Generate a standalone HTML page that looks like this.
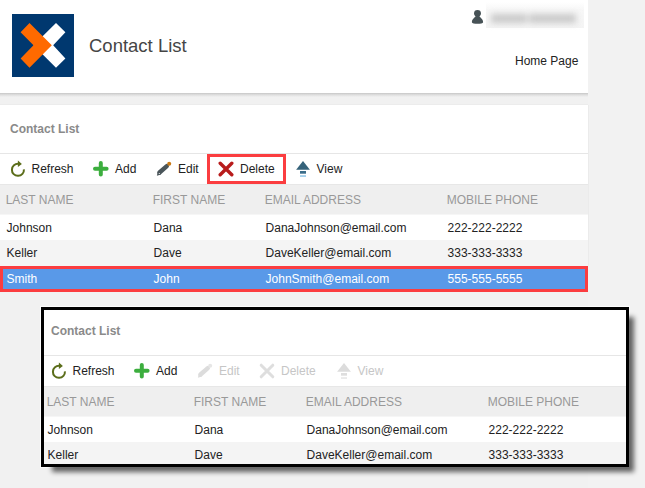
<!DOCTYPE html>
<html><head><meta charset="utf-8">
<style>
*{box-sizing:border-box;margin:0;padding:0}
html,body{width:645px;height:488px;overflow:hidden}
body{background:#f2f2f2;font-family:"Liberation Sans",Arial,sans-serif;font-size:12px;color:#222;position:relative}
.abs{position:absolute}
.hdr{left:0;top:0;width:588px;height:93px;background:#fff}
.hsh{left:0;top:93px;width:588px;height:4px;background:linear-gradient(#c6c6c6,#dcdcdc 40%,#f1f1f1)}
.logo{left:12px;top:14px;width:62px;height:63px}
.title{left:89px;top:34.6px;font-size:18.5px;color:#454545;letter-spacing:0px;white-space:nowrap}
.home{left:515px;top:54px;font-size:12px;color:#222;white-space:nowrap}
.ptitle{font-weight:bold;color:#8a8a8a;font-size:12px;white-space:nowrap}
.line{height:1px;background:#e6e6e6}
.tb{white-space:nowrap;font-size:12px;color:#222}
.th{color:#999;font-size:12px;white-space:nowrap}
.td{font-size:12px;color:#222;white-space:nowrap}
.tb.dis{color:#c6c6c6}
</style></head><body>
<div class="abs" style="left:0;top:0;width:588px;height:488px;background:#f1f1f1"></div>
<!-- header -->
<div class="abs hdr"></div>
<div class="abs hsh"></div>
<svg class="abs logo" viewBox="0 0 62 63"><rect width="62" height="63" fill="#00386f"/>
<polygon points="44,8.9 53.4,18.2 41.2,31.3 53.4,44.5 44,53.8 21.5,31.3" fill="#fff"/>
<polygon points="17.5,8.9 39.8,31.3 17.5,53.8 8.6,44.5 21.5,31.3 8.6,18.2" fill="#ff6a00"/>
</svg>
<div class="abs title">Contact List</div>
<svg class="abs" style="left:471px;top:9px" width="14" height="16" viewBox="0 0 14 16"><circle cx="6.5" cy="4.35" r="3.45" fill="#475256"/><path d="M0.9 13.2 C0.9 9.8 3.8 8.6 5.2 6.4 L7.8 6.4 C9.2 8.6 12.1 9.8 12.1 13.2 C12.1 15.2 0.9 15.2 0.9 13.2 Z" fill="#475256"/></svg>
<div class="abs" style="left:486px;top:2px;width:98px;height:26px;background:linear-gradient(#ffffff,#f7f7f7 30%,#f4f4f4)"></div>
<div class="abs" style="left:487px;top:9px;width:96px;height:19px;filter:blur(3px)"><div style="position:absolute;left:4px;top:5px;width:36px;height:9px;background:#c9c9c9"></div><div style="position:absolute;left:42px;top:5px;width:47px;height:9px;background:#c9c9c9"></div></div>
<div class="abs home">Home Page</div>

<!-- panel 1 -->
<div class="abs" style="left:0;top:104px;width:588px;height:1px;background:#ececec"></div>
<div class="abs" style="left:0;top:105px;width:588px;height:80px;background:#fff"></div>
<div class="abs ptitle" style="left:10px;top:122px">Contact List</div>
<div class="abs line" style="left:0;top:153px;width:588px"></div>
<div class="abs" style="left:0;top:184px;width:588px;height:30px;background:#efefef;border-top:1px solid #e7e7e7"></div>
<div class="abs" style="left:588px;top:105px;width:1px;height:161px;background:#ebebeb"></div>
<div class="abs" style="left:0;top:214px;width:588px;height:26px;background:#fff;border-top:1px solid #f6f6f6"></div>
<div class="abs" style="left:0;top:240px;width:588px;height:26px;background:#f4f4f4"></div>
<div class="abs" style="left:0;top:266px;width:588px;height:26px;background:#5999e8;border:3px solid #fb3d40"></div>
<div class="abs" style="left:207px;top:154px;width:79px;height:30px;border:3px solid #fb3d40"></div>
<svg class="abs" style="left:10px;top:160px" width="16" height="18" viewBox="0 0 16 18"><path d="M8.5 3.9 A6 6 0 1 0 13.9 9.3" fill="none" stroke="#5b6d1a" stroke-width="2"/><polygon points="7.9,0.6 11.9,3.9 7.9,7.1" fill="#5b6d1a"/></svg>
<div class="abs tb" style="left:31.5px;top:162px">Refresh</div>
<svg class="abs" style="left:93px;top:161px" width="16" height="16" viewBox="0 0 16 16"><path d="M7.8 2V13.6M2 7.8H13.6" stroke="#3cae3e" stroke-width="4" stroke-linecap="round"/></svg>
<div class="abs tb" style="left:115px;top:162px">Add</div>
<svg class="abs" style="left:155px;top:161px" width="18" height="16" viewBox="0 0 18 16"><path d="M1.9 14.8 L2.8 10.4 L6 13.4 Z" fill="#4a555a"/><path d="M4.5 11.5 L11.8 5.1" stroke="#4a555a" stroke-width="4.4" stroke-linecap="round"/><circle cx="14.2" cy="2.7" r="2" fill="#c87814"/><circle cx="4.3" cy="12.5" r="0.6" fill="#fff"/></svg>
<div class="abs tb" style="left:178px;top:162px">Edit</div>
<svg class="abs" style="left:218px;top:161px" width="17" height="17" viewBox="0 0 17 17"><path d="M2.2 2.2L13.8 13.8M13.8 2.2L2.2 13.8" stroke="#b81c1c" stroke-width="3.4" stroke-linecap="round"/></svg>
<div class="abs tb" style="left:240px;top:162px">Delete</div>
<svg class="abs" style="left:295px;top:160px" width="16" height="18" viewBox="0 0 16 18"><polygon points="8,0.9 14.9,9.8 1.1,9.8" fill="#35627a"/><rect x="5" y="11" width="6" height="2.7" fill="#3b6d8a"/><rect x="5" y="15.2" width="6" height="1.7" fill="#9dcdea"/></svg>
<div class="abs tb" style="left:316.5px;top:162px">View</div>
<div class="abs th" style="left:5.7px;top:193px">LAST NAME</div>
<div class="abs th" style="left:152.7px;top:193px">FIRST NAME</div>
<div class="abs th" style="left:264.7px;top:193px">EMAIL ADDRESS</div>
<div class="abs th" style="left:446.7px;top:193px">MOBILE PHONE</div>
<div class="abs td" style="left:6.6px;top:221px">Johnson</div>
<div class="abs td" style="left:153.6px;top:221px">Dana</div>
<div class="abs td" style="left:265.6px;top:221px">DanaJohnson@email.com</div>
<div class="abs td" style="left:447.6px;top:221px">222-222-2222</div>
<div class="abs td" style="left:6.6px;top:246px">Keller</div>
<div class="abs td" style="left:153.6px;top:246px">Dave</div>
<div class="abs td" style="left:265.6px;top:246px">DaveKeller@email.com</div>
<div class="abs td" style="left:447.6px;top:246px">333-333-3333</div>
<div class="abs td" style="left:6.6px;top:272px;color:#fff">Smith</div>
<div class="abs td" style="left:153.6px;top:272px;color:#fff">John</div>
<div class="abs td" style="left:265.6px;top:272px;color:#fff">JohnSmith@email.com</div>
<div class="abs td" style="left:447.6px;top:272px;color:#fff">555-555-5555</div>

<!-- panel 2 -->
<div class="abs" style="left:40px;top:306px;width:590px;height:162px;border:1px solid rgba(255,255,255,.8)"></div>
<div class="abs" style="left:51.5px;top:316.5px;width:582.5px;height:155.5px;background:rgba(0,0,0,.6);filter:blur(2.5px)"></div>
<div class="abs" style="left:41px;top:307px;width:588px;height:160px;background:#fff;border:3px solid #000"></div>
<div class="abs ptitle" style="left:51px;top:324px">Contact List</div>
<div class="abs line" style="left:44px;top:355px;width:582px"></div>
<div class="abs" style="left:44px;top:386px;width:582px;height:30px;background:#efefef;border-top:1px solid #e7e7e7"></div>
<div class="abs" style="left:44px;top:416px;width:582px;height:26px;background:#fff;border-top:1px solid #f6f6f6"></div>
<div class="abs" style="left:44px;top:442px;width:582px;height:22px;background:#f4f4f4"></div>
<svg class="abs" style="left:51px;top:362px" width="16" height="18" viewBox="0 0 16 18"><path d="M8.5 3.9 A6 6 0 1 0 13.9 9.3" fill="none" stroke="#5b6d1a" stroke-width="2"/><polygon points="7.9,0.6 11.9,3.9 7.9,7.1" fill="#5b6d1a"/></svg>
<div class="abs tb" style="left:72.5px;top:364px">Refresh</div>
<svg class="abs" style="left:134px;top:363px" width="16" height="16" viewBox="0 0 16 16"><path d="M7.8 2V13.6M2 7.8H13.6" stroke="#3cae3e" stroke-width="4" stroke-linecap="round"/></svg>
<div class="abs tb" style="left:156px;top:364px">Add</div>
<svg class="abs" style="left:196px;top:363px" width="18" height="16" viewBox="0 0 18 16"><path d="M1.9 14.8 L2.8 10.4 L6 13.4 Z" fill="#dcdcdc"/><path d="M4.5 11.5 L11.8 5.1" stroke="#dcdcdc" stroke-width="4.4" stroke-linecap="round"/><circle cx="14.2" cy="2.7" r="2" fill="#e6e6e6"/></svg>
<div class="abs tb dis" style="left:219px;top:364px">Edit</div>
<svg class="abs" style="left:259px;top:363px" width="17" height="17" viewBox="0 0 17 17"><path d="M2.2 2.2L13.8 13.8M13.8 2.2L2.2 13.8" stroke="#dedede" stroke-width="3.0" stroke-linecap="round"/></svg>
<div class="abs tb dis" style="left:281px;top:364px">Delete</div>
<svg class="abs" style="left:336px;top:362px" width="16" height="18" viewBox="0 0 16 18"><polygon points="8,0.9 14.9,9.8 1.1,9.8" fill="#dcdcdc"/><rect x="5" y="11" width="6" height="2.7" fill="#dedede"/><rect x="5" y="15.2" width="6" height="1.7" fill="#e8e8e8"/></svg>
<div class="abs tb dis" style="left:357.5px;top:364px">View</div>
<div class="abs th" style="left:46.7px;top:395px">LAST NAME</div>
<div class="abs th" style="left:193.7px;top:395px">FIRST NAME</div>
<div class="abs th" style="left:305.7px;top:395px">EMAIL ADDRESS</div>
<div class="abs th" style="left:487.7px;top:395px">MOBILE PHONE</div>
<div class="abs td" style="left:47.6px;top:423px">Johnson</div>
<div class="abs td" style="left:194.6px;top:423px">Dana</div>
<div class="abs td" style="left:306.6px;top:423px">DanaJohnson@email.com</div>
<div class="abs td" style="left:488.6px;top:423px">222-222-2222</div>
<div class="abs td" style="left:47.6px;top:448px">Keller</div>
<div class="abs td" style="left:194.6px;top:448px">Dave</div>
<div class="abs td" style="left:306.6px;top:448px">DaveKeller@email.com</div>
<div class="abs td" style="left:488.6px;top:448px">333-333-3333</div>
</body></html>
